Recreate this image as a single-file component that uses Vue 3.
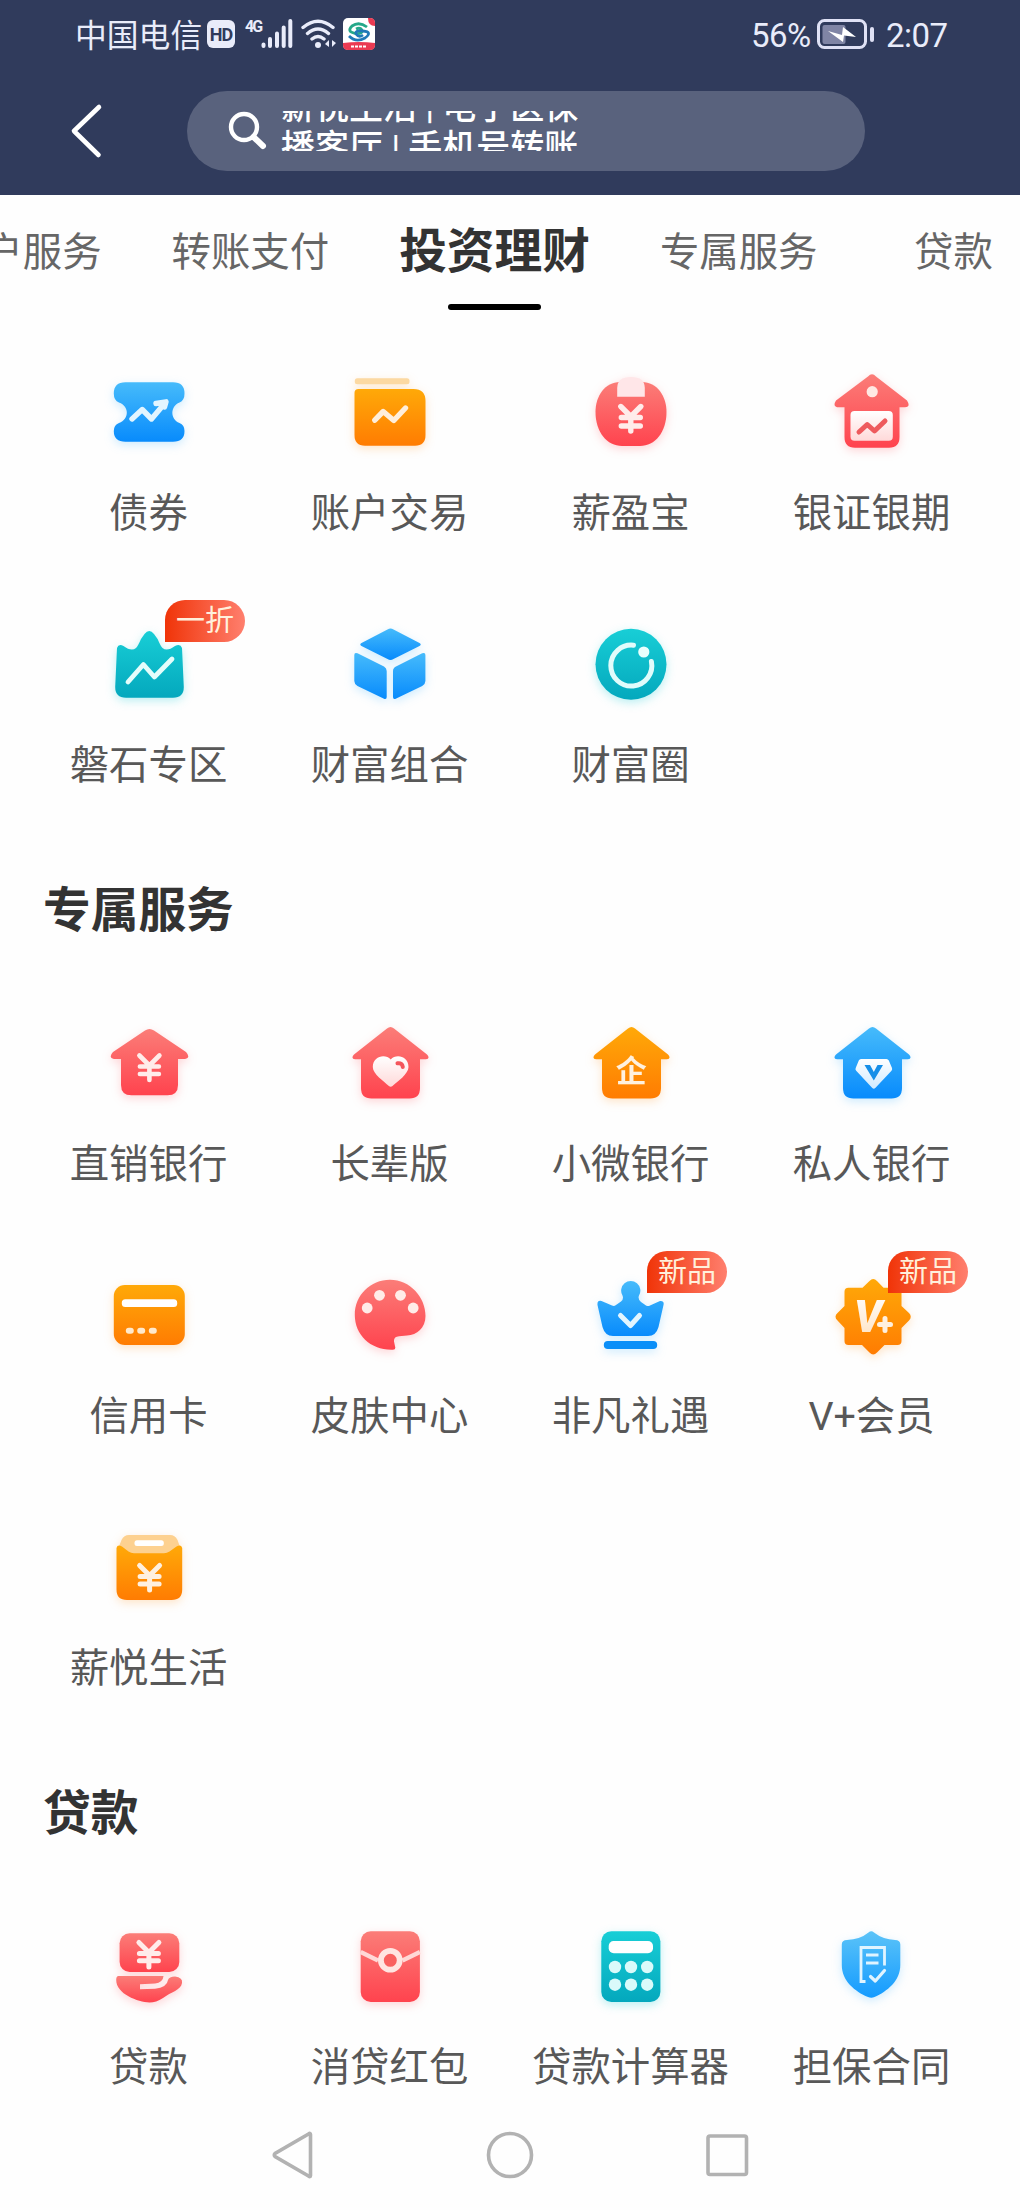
<template>
    <div class="phone">
        <!-- shared gradients for all icons -->
        <svg class="defs" width="0" height="0">
            <defs>
                <linearGradient v-for="g in gradients" :id="g.id" :key="g.id" x1="0" y1="0" x2="0" y2="1">
                    <stop offset="0" :stop-color="g.from" />
                    <stop offset="1" :stop-color="g.to" />
                </linearGradient>
            </defs>
        </svg>

        <header class="header">
            <div class="status">
                <span class="carrier">中国电信</span>
                <span class="hd">HD</span>
                <span class="net">4G</span>
                <svg class="signal" width="32" height="30" viewBox="0 0 32 30">
                    <path d="M2.5 25.5V27M9 20V27M16 14.5V27M22.7 8.5V27M29.3 2V27" stroke="#e9ecfa" stroke-width="4" stroke-linecap="round" />
                </svg>
                <svg class="wifi" width="36" height="30" viewBox="0 0 36 30" fill="none" stroke="#e9ecfa" stroke-width="3.4" stroke-linecap="round">
                    <path d="M2 8.5Q17 -4 32 8.5M6.500 14.500Q17 5.500 27.500 14.500M11 20Q17 15 23 20" />
                    <circle cx="17" cy="26" r="3" fill="#e9ecfa" stroke="none" />
                    <path d="M24 25L28 21V28ZM31 21L35 24L31 28Z" fill="#e9ecfa" stroke="none" />
                </svg>
                <svg class="app" width="32" height="32" viewBox="0 0 32 32">
                    <rect width="32" height="32" rx="5" fill="#fff" />
                    <path d="M0 25Q16 23 32 25V27Q32 32 27 32H5Q0 32 0 27Z" fill="#ea3a52" />
                    <path d="M25 0H27Q32 0 32 5V8Q25 8 25 0Z" fill="#ea3a52" />
                    <path d="M24 9Q16 3 9 8Q3 14 13 15.500Q20 16 19 12Q17 9 13 11" fill="none" stroke="#25a889" stroke-width="2.800" />
                    <path d="M6 18Q13 25 22 20Q30 14 20 13Q12 12 13 16Q16 20 20 17" fill="none" stroke="#2079b8" stroke-width="2.800" />
                    <path d="M8 28.500H24" stroke="#fff" stroke-width="2" stroke-dasharray="3 1" />
                </svg>
                <span class="percent">56%</span>
                <svg class="battery" width="58" height="32" viewBox="0 0 58 32">
                    <rect x="1.500" y="2.500" width="47" height="27" rx="6" fill="none" stroke="#dfe1f5" stroke-width="3" />
                    <rect x="5.500" y="7" width="23" height="19" rx="2" fill="#8085a5" />
                    <path d="M11 13L25 17L26 9L39 19L27 17.500L26 24Z" fill="#fff" />
                    <path d="M55 11V22" stroke="#dfe1f5" stroke-width="4" stroke-linecap="round" />
                </svg>
                <span class="clock">2:07</span>
            </div>
            <div class="search-row">
                <svg class="back" width="34" height="60" viewBox="0 0 34 60">
                    <path d="M29 6L4 30L28.500 54" fill="none" stroke="#fff" stroke-width="4.600" stroke-linecap="round" stroke-linejoin="round" />
                </svg>
                <div class="search">
                    <svg width="40" height="40" viewBox="0 0 40 40" fill="none" stroke="#fff">
                        <circle cx="16" cy="16" r="13" stroke-width="4.400" />
                        <path d="M25.500 26L35 35" stroke-width="6" stroke-linecap="round" />
                    </svg>
                    <div class="ticker">
                        <div class="ticker-list">
                            <p v-for="hint in hints" :key="hint">{{ hint }}</p>
                        </div>
                    </div>
                </div>
            </div>
        </header>

        <nav class="tabs">
            <div v-for="tab in tabs" :key="tab" class="tab" :class="{ active: tab === activeTab }">{{ tab }}</div>
        </nav>

        <main class="content">
            <section v-for="(section, i) in sections" :key="i">
                <h2 v-if="section.title">{{ section.title }}</h2>
                <div class="grid">
                    <div v-for="item in section.items" :key="item.name" class="item">
                        <svg class="icon" :class="item.tone" width="96" height="96" viewBox="0 0 96 96" v-html="item.icon"></svg>
                        <span v-if="item.badge" class="badge">{{ item.badge }}</span>
                        <span class="label">{{ item.name }}</span>
                    </div>
                </div>
            </section>
        </main>

        <footer class="navbar">
            <svg width="48" height="52" viewBox="0 0 48 52"><path d="M41.500 5.500Q41.500 3.500 39.500 5L6 24.500Q4.500 26 6 27.500L39.500 47Q41.500 48.500 41.500 46.500Z" /></svg>
            <svg width="48" height="52" viewBox="0 0 48 52"><circle cx="24" cy="26" r="21.500" /></svg>
            <svg width="48" height="52" viewBox="0 0 48 52"><rect x="5" y="7" width="38.500" height="38.500" rx="2" /></svg>
        </footer>
    </div>
</template>

<script setup>
import { ref } from 'vue';

const gradients = [
    { id: 'blue', from: '#46bbfb', to: '#088bfc' },
    { id: 'orange', from: '#ffa908', to: '#ff7c02' },
    { id: 'red', from: '#fb7d78', to: '#ff434e' },
    { id: 'teal', from: '#18ced6', to: '#04a8bd' },
    { id: 'creamBlue', from: '#ffffff', to: '#cfeaff' },
    { id: 'creamOrange', from: '#ffffff', to: '#ffe0bd' },
    { id: 'creamRed', from: '#ffffff', to: '#ffd9d9' },
];

const hints = ['薪悦生活 | 电子医保', '播客厅 | 手机号转账'];

const tabs = ['账户服务', '转账支付', '投资理财', '专属服务', '贷款'];
const activeTab = ref('投资理财');

// stroke helper used by the line parts of the icons
const line = (d, color, width = 5) =>
    `<path d="${d}" fill="none" stroke="${color}" stroke-width="${width}" stroke-linecap="round" stroke-linejoin="round"/>`;

// yuan sign made of round strokes, x is the centre and y the top
const yen = (x, y, color, width = 4.4, gap = 8) =>
    line(`M${x - 10} ${y + 2}L${x} ${y + 12}L${x + 10} ${y + 2}M${x - 9.5} ${y + 13}H${x + 9.5}M${x - 9.5} ${y + 13 + gap}H${x + 9.5}M${x} ${y + 13}V${y + 26.5}`, color, width);

// house with a wide roof
const house = (fill) =>
    `<path d="M45 12.500Q48.500 9.500 52 12.500L85 38.500Q88.500 42.500 84 43.300H78V72Q78 82.500 67.500 82.500H29.500Q19 82.500 19 72V43.300H13Q8.500 42.500 12 38.500Z" fill="url(#${fill})"/>`;

const icons = {
    bond: `<path d="M24.500 17.300H72Q83.500 17.300 83.500 28.500Q83.500 35.500 78.500 37.500C69 41.500 69 54 78.500 58Q83.500 60 83.500 66Q83.500 76.700 72 76.700H24.500Q12.800 76.700 12.800 66Q12.800 60 18 58C28.500 54 28.500 41.500 18 37.500Q12.800 35.500 12.800 28.500Q12.800 17.300 24.500 17.300Z" fill="url(#blue)"/>`
        + line('M31 54L41.200 44.500L50.500 54L64 38M55 38.500L65 36.800L63.500 42', '#e2f5ff', 5.4),
    trade: `<rect x="12.800" y="13.300" width="54.700" height="6" rx="2.500" fill="#fcd9a2"/>
        <path d="M16.500 24H71.500Q83.500 24 83.500 36V70Q83.500 80.700 73 80.700H23Q12.500 80.700 12.500 70V28Q12.500 24 16.500 24Z" fill="url(#orange)"/>`
        + line('M32.800 55.200L41.200 46.500L51.800 55.500L63.500 43', '#ffeeda', 5.4),
    salary: `<path d="M37 17H59C74 17 83.500 31 83.500 47C83.500 67 72 81 57 81H39C24 81 12.500 67 12.500 47C12.500 31 22 17 37 17Z" fill="url(#red)"/>
        <path d="M34.200 31.700V23Q34.200 12 48 12Q61.800 12 61.800 23V31.700Z" fill="#ffe6e8"/>`
        + yen(47.8, 39.500, '#ffecea', 5.4, 8.500),
    futures: `<path d="M44 11.500Q48 7 52 11.500L83 35.500Q87 42 81 42.300H75.500V72Q75.500 82.700 65 82.700H31Q20.500 82.700 20.500 72V42.300H15Q8 42 12 35.500Z" fill="url(#red)"/>
        <circle cx="48.200" cy="26.700" r="5.600" fill="#ffe8e2"/>
        <rect x="26.500" y="46" width="42.300" height="29.700" rx="4" fill="url(#creamRed)"/>`
        + line('M35 67L43.200 59.500L50.500 66L61 56', '#ee5a5d', 5),
    rock: `<path d="M16 31Q17.500 26.500 22.500 29Q30.500 35 35 31Q37 29 40 22L43.500 17Q48.300 11 53 17L56.600 22Q59.500 29 61.500 31Q66 35 74 29Q79.500 26.500 81 31L82.800 70Q82.800 80.700 72 80.700H25Q14.200 80.700 14.200 70Z" fill="url(#teal)"/>`
        + line('M27 65L42.400 47.500L53.400 60L71 42', '#e4fdfb', 4.800),
    portfolio: `<path d="M45.500 12.500Q48.500 10.500 51.500 12.500L77.500 26Q80 27.500 77.500 29L51.500 42Q48.500 44 45.500 42L19.500 29Q17 27.500 19.500 26Z" fill="url(#blue)"/>
        <path d="M15.500 36.300L42 49.500Q44.700 51 44.700 54V80Q44.700 83 41.500 81.500L15.500 69Q12.300 67 12.300 64V38Q12.300 35 15.500 36.300ZM80.200 36.300L54 49.500Q51 51 51 54V80Q51 83 54.200 81.500L80.200 69Q83.400 67 83.400 64V38Q83.400 35 80.200 36.300Z" fill="url(#blue)"/>`,
    circle: `<circle cx="48" cy="47.300" r="35.500" fill="url(#teal)"/><circle cx="60.800" cy="35" r="5.600" fill="#e8fffd"/>`
        + line('M50.500 28.200A20.500 20.500 0 1 0 68.400 44.500', '#e0fcfb', 5),
    direct: `<path d="M44 14.500Q48.500 11.500 53 14.500L85 36Q90 41.500 84 43H77V69Q77 79.300 66.500 79.300H30.500Q20 79.300 20 69V43H13Q7 41.500 12 36Z" fill="url(#red)"/>`
        + yen(48.4, 37.5, '#ffecea', 4.600, 7.500),
    elder: house('red')
        + `<path d="M48.700 43.500C54 37.500 66.500 40 66.500 51C66.500 58 55 66 50.500 70Q48.700 71.500 46.900 70C42 65.500 30.800 58 30.800 51C30.800 40 43.500 37.500 48.700 43.500Z" fill="url(#creamRed)"/>`
        + line('M55.500 47.300Q60.300 46.500 60.800 51', '#f4565c', 4),
    small: house('orange') + `<text x="48.200" y="66" text-anchor="middle" class="qi">企</text>`,
    private: house('blue')
        + `<path d="M37 43H62.500Q64 43 64.800 44.500L68 52Q68.500 53.500 67.500 54.800L51.300 72Q49.800 73.300 48.300 72L32.200 54.800Q31 53.500 31.700 52L34.800 44.500Q35.500 43 37 43Z" fill="url(#creamBlue)"/>
        <path d="M40.500 49H46L49.800 56L53.500 49H59L49.800 64.500Z" fill="#168fe8"/>`,
    card: `<rect x="12.800" y="17" width="71" height="60" rx="11" fill="url(#orange)"/>
        <rect x="20.800" y="31.300" width="55.400" height="7.700" rx="3.500" fill="#fff"/>
        <rect x="24.800" y="59.700" width="8" height="6" rx="3" fill="#ffe9cc"/><rect x="36.200" y="59.700" width="8" height="6" rx="3" fill="#ffe9cc"/><rect x="47.800" y="59.700" width="8" height="6" rx="3" fill="#ffe9cc"/>`,
    skin: `<path d="M48 11.700C68 11.700 83.500 29 83.500 48C83.500 60 75 67 65 67.500L57 68.300Q51.500 68.800 52 73.500L53.300 79.500Q53.500 81.700 51 81.700C29 82.500 12.800 67 12.800 47C12.800 27 28.500 11.700 48 11.700Z" fill="url(#red)"/>
        <g fill="#ffece8"><circle cx="25.200" cy="40" r="5.400"/><circle cx="37.500" cy="27.300" r="5.400"/><circle cx="58.500" cy="27.300" r="5.400"/><circle cx="71.200" cy="40" r="5.400"/></g>`,
    gift: `<path d="M39.500 27.500A9.600 9.600 0 1 1 56 27.500Q54.500 31 58 34L63 37.500Q65 38.500 67 37.500L77 33Q81.500 32.500 80.500 37L75.500 59Q73 68 65 68H30Q22 68 19.500 59L14.500 37Q14 32 18.500 33L29 37.500Q31 38.500 33 37L38 33.500Q41 31 39.500 27.500Z" fill="url(#blue)"/>
        <rect x="20.800" y="73" width="53.400" height="8" rx="4" fill="#0b8ff8"/>`
        + line('M37.500 47.500L47.500 57.500L56.500 47.500', '#e2f5ff', 5),
    vip: `<path d="M45.500 13Q49.200 9 53 13L59.500 19.700H73.500Q77.500 19.700 77.500 23.700V38L85 45Q88.500 48.700 85 52.500L77.500 60V73Q77.500 77 73.500 77H60.500L53 84.500Q49.200 88.500 45.500 84.500L38 77H24.500Q20.500 77 20.500 73V60L13.500 52.500Q9.500 48.700 13.500 45L20.500 38V23.700Q20.500 19.700 24.500 19.700H38.500Z" fill="url(#orange)"/>
        <text x="30" y="64.300" class="vee">V</text>`
        + line('M55.500 56.500H66.500M61 50.500V62.500', '#fff0df', 5),
    life: `<path d="M28 15H69Q74 15 76.500 20L79 27V38H17.800V27L20.500 20Q23 15 28 15Z" fill="#fdd190"/>
        <path d="M15.500 28Q16.500 24 21 26.500L27.500 31.500Q30 33.300 33 33.300H63Q66 33.300 68.500 31.500L75.500 26.500Q80 24 81.200 28V69.500Q81.200 80 70.500 80H26Q15.500 80 15.500 69.500Z" fill="url(#orange)"/>
        <rect x="33.500" y="20.300" width="29.300" height="5.700" rx="2.500" fill="#fff"/>`
        + yen(48.6, 43.500, '#fff0df', 5, 7.500),
    loan: `<rect x="18.600" y="14.300" width="59.700" height="38.700" rx="10" fill="url(#red)"/>
        <path d="M17.500 57H62.500Q62 63.500 54 64.500L39 65.300V70.200L54 69.800Q66 68.500 67 61Q68 57.500 74 57.500Q82 58.500 81 64C80 71 70 73 62 79Q55 83.500 48.500 83.500C37 83 15.200 75 15.200 61Q15.200 57 17.500 57Z" fill="url(#red)"/>`
        + yen(47.9, 21.5, '#ffecea', 5, 7.300),
    redpack: `<rect x="18.700" y="12.300" width="59.200" height="70.700" rx="10" fill="url(#red)"/>`
        + `<path d="M18.700 33L36 41.500M77.900 33L60.500 41.500" stroke="#ffd8d6" stroke-width="4.200"/><circle cx="48.300" cy="41.300" r="9.400" fill="#f9615f" stroke="#ffe5e1" stroke-width="5.800"/>`,
    calc: `<rect x="18.300" y="12.300" width="59.100" height="70.700" rx="10" fill="url(#teal)"/>
        <rect x="25.700" y="22" width="44.300" height="12.300" rx="5" fill="#fff"/>
        <g fill="#dafafa"><circle cx="32" cy="48" r="6.200"/><circle cx="48" cy="48" r="6.200"/><circle cx="64.200" cy="48" r="6.200"/><circle cx="32" cy="65.700" r="6.200"/><circle cx="48" cy="65.700" r="6.200"/><circle cx="64.200" cy="65.700" r="6.200"/></g>`,
    contract: `<path d="M44.500 13.500Q47.300 11 50 13.500Q59 20.500 71 21Q76.300 21 76.300 25.500V46C76.300 62 63 72.500 50.500 78Q47.300 79.500 44 78C31 72.500 17.800 62 17.800 46V25.500Q17.800 21 23 21Q36 20.500 44.500 13.500Z" fill="url(#shield)"/>
        <path d="M41.500 62.500H37V28.500H60.500V46.500M42 36H54.500M42 44H54.500" fill="none" stroke="#e0f4ff" stroke-width="2.800"/>`
        + line('M46.500 57.500L51.300 62L60.500 51.500', '#e0f4ff', 3.200),
};

// the shield is a little lighter than the other blue icons
gradients.push({ id: 'shield', from: '#5bc3f8', to: '#149bff' });

const sections = [
    {
        items: [
            { name: '债券', tone: 'tone-blue', icon: icons.bond },
            { name: '账户交易', tone: 'tone-orange', icon: icons.trade },
            { name: '薪盈宝', tone: 'tone-red', icon: icons.salary },
            { name: '银证银期', tone: 'tone-red', icon: icons.futures },
            { name: '磐石专区', tone: 'tone-teal', icon: icons.rock, badge: '一折' },
            { name: '财富组合', tone: 'tone-blue', icon: icons.portfolio },
            { name: '财富圈', tone: 'tone-teal', icon: icons.circle },
        ],
    },
    {
        title: '专属服务',
        items: [
            { name: '直销银行', tone: 'tone-red', icon: icons.direct },
            { name: '长辈版', tone: 'tone-red', icon: icons.elder },
            { name: '小微银行', tone: 'tone-orange', icon: icons.small },
            { name: '私人银行', tone: 'tone-blue', icon: icons.private },
            { name: '信用卡', tone: 'tone-orange', icon: icons.card },
            { name: '皮肤中心', tone: 'tone-red', icon: icons.skin },
            { name: '非凡礼遇', tone: 'tone-blue', icon: icons.gift, badge: '新品' },
            { name: 'V+会员', tone: 'tone-orange', icon: icons.vip, badge: '新品' },
            { name: '薪悦生活', tone: 'tone-orange', icon: icons.life },
        ],
    },
    {
        title: '贷款',
        items: [
            { name: '贷款', tone: 'tone-red', icon: icons.loan },
            { name: '消贷红包', tone: 'tone-red', icon: icons.redpack },
            { name: '贷款计算器', tone: 'tone-teal', icon: icons.calc },
            { name: '担保合同', tone: 'tone-blue', icon: icons.contract },
        ],
    },
];
</script>

<style>
body {
    margin: 0;
    background: #fefefe;
}
</style>

<style scoped>
.phone {
    width: 1020px;
    height: 2210px;
    overflow: hidden;
    display: flex;
    flex-direction: column;
    background: #fefefe;
    font-family: Roboto, "Noto Sans CJK SC", sans-serif;
}

.defs {
    position: absolute;
}

.header {
    height: 195px;
    flex-shrink: 0;
    background: #303b5c;
}

.status {
    height: 68px;
    display: flex;
    align-items: center;
    padding-left: 75px;
    color: #e9ecfa;
    white-space: nowrap;
}

.carrier {
    width: 132px;
    padding-top: 3px;
    font-size: 31.8px;
    line-height: 40px;
}

.hd {
    width: 28px;
    height: 28px;
    border-radius: 6px;
    background: #e9ecfa;
    color: #303b5c;
    font-size: 18px;
    font-weight: 700;
    line-height: 29px;
    text-align: center;
    letter-spacing: -1px;
}

.net {
    width: 16px;
    margin-left: 10px;
    margin-bottom: 15px;
    font-size: 16px;
    font-weight: 700;
    letter-spacing: -2px;
}

.wifi {
    margin-left: 8px;
}

.app {
    margin-left: 6px;
}

.percent {
    margin-left: 376px;
    width: 66px;
    padding-top: 3px;
    font-size: 33px;
    letter-spacing: -0.5px;
}

.clock {
    margin-left: 11px;
    padding-top: 3px;
    font-size: 33px;
    letter-spacing: -0.5px;
}

.search-row {
    display: flex;
    align-items: center;
    height: 80px;
    margin-top: 23px;
    padding-left: 70px;
}

.search {
    display: flex;
    align-items: center;
    width: 678px;
    height: 80px;
    margin-left: 83px;
    padding-left: 41px;
    box-sizing: border-box;
    border-radius: 40px;
    background: #59627d;
}

.ticker {
    height: 40px;
    margin-left: 13px;
    overflow: hidden;
    color: #fff;
}

/* caught halfway between two hints */
.ticker-list {
    margin-top: -24px;
}

.ticker p {
    margin: 0;
    font-size: 34px;
    font-weight: 500;
    line-height: 40px;
    white-space: pre;
}

.tabs {
    display: flex;
    height: 115px;
    flex-shrink: 0;
    margin-left: -56px;
    gap: 70px;
    font-size: 39.4px;
    line-height: 115px;
    color: #666;
    white-space: nowrap;
}

.tab {
    min-width: 132px;
    flex-shrink: 0;
    text-align: center;
}

.tab.active {
    position: relative;
    font-size: 47.7px;
    font-weight: 700;
    color: #333;
}

.tab.active::after {
    content: "";
    position: absolute;
    left: 49px;
    bottom: 0;
    width: 93px;
    height: 6px;
    border-radius: 3px;
    background: #000;
}

.content {
    padding: 55px 28px 0;
}

h2 {
    margin: 0;
    padding: 1px 0 64px 15px;
    font-size: 47.7px;
    line-height: 82px;
    font-weight: 700;
    color: #333;
}

.grid {
    display: grid;
    grid-template-columns: repeat(4, 241px);
    grid-auto-rows: 252px;
}

.item {
    position: relative;
    display: flex;
    flex-direction: column;
    align-items: center;
}

.icon {
    overflow: visible;
}

.tone-blue {
    filter: drop-shadow(0 3px 5px rgba(60, 180, 255, 0.25));
}

.tone-orange {
    filter: drop-shadow(0 3px 5px rgba(255, 150, 40, 0.25));
}

.tone-red {
    filter: drop-shadow(0 3px 5px rgba(255, 90, 100, 0.25));
}

.tone-teal {
    filter: drop-shadow(0 3px 5px rgba(30, 205, 215, 0.3));
}

.icon :deep(.qi) {
    font-size: 31px;
    font-weight: 700;
    fill: #fff1df;
}

.icon :deep(.vee) {
    font-family: Roboto, "Liberation Sans", sans-serif;
    font-size: 44px;
    font-weight: 900;
    font-style: italic;
    fill: url(#creamOrange);
}

.badge {
    position: absolute;
    left: 137px;
    top: -17px;
    width: 80px;
    height: 42px;
    border-radius: 20px 21px 21px 0;
    background: linear-gradient(90deg, #f03408, #ff7f6e);
    color: #fff0dc;
    font-size: 29px;
    line-height: 43px;
    text-align: center;
}

.label {
    margin-top: 30px;
    font-size: 39.4px;
    line-height: 46px;
    color: #585858;
    white-space: nowrap;
}

.navbar {
    display: flex;
    justify-content: center;
    gap: 169px;
    margin-top: -42px;
}

.navbar svg {
    fill: none;
    stroke: #b2b2b2;
    stroke-width: 3.6;
}
</style>
